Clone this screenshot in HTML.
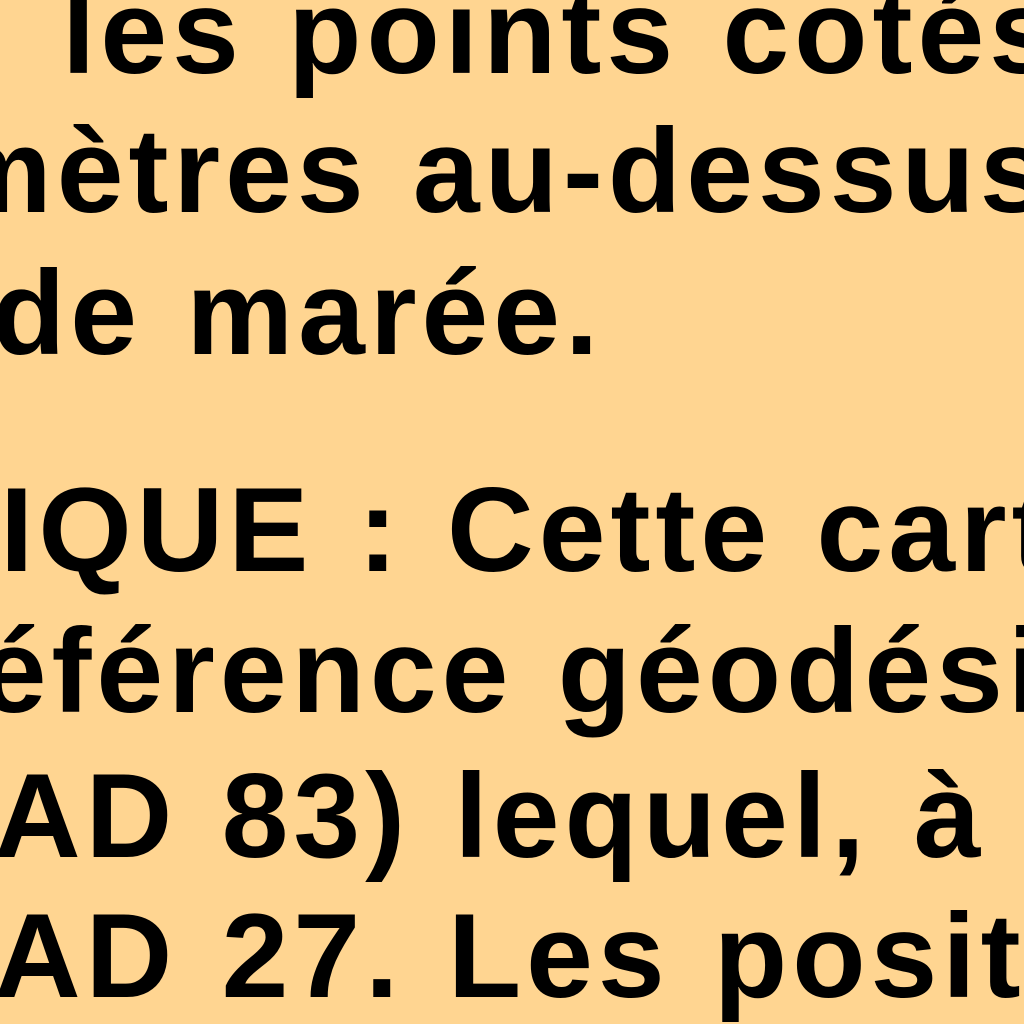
<!DOCTYPE html>
<html><head><meta charset="utf-8"><style>
html,body{margin:0;padding:0;width:1024px;height:1024px;overflow:hidden;background:#ffd591;}
.l{position:absolute;white-space:pre;font-family:"Liberation Sans",Arial,sans-serif;font-weight:bold;font-size:120px;line-height:1;color:#000;letter-spacing:5px;word-spacing:6px;}
</style></head><body>
<div class="l" style="left:62px;top:-28px">les points cotés</div>
<div class="l" style="left:-55px;top:111px">mètres au-dessus</div>
<div class="l" style="left:-8px;top:253px">de marée.</div>
<div class="l" style="left:-85px;top:470px">SIQUE : Cette carte</div>
<div class="l" style="left:-72px;top:611px">référence géodésique</div>
<div class="l" style="left:-6px;top:756px">AD 83) lequel, à</div>
<div class="l" style="left:-6px;top:896px">AD 27. Les positions</div>
</body></html>
